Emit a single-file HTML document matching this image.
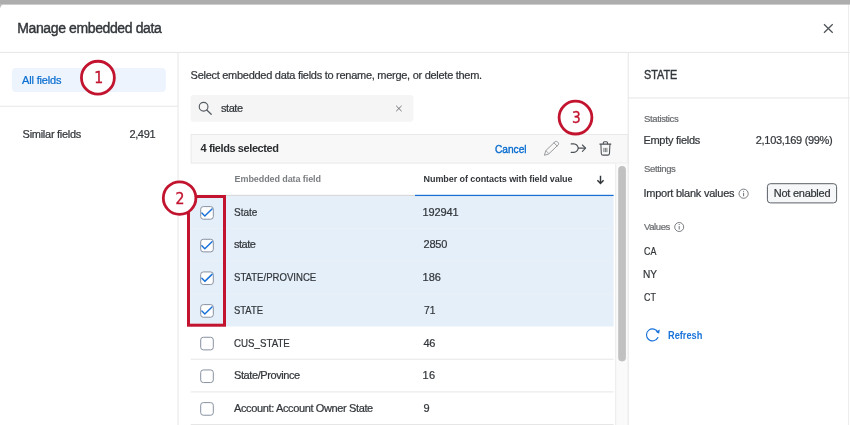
<!DOCTYPE html>
<html><head><meta charset="utf-8">
<style>
*{box-sizing:border-box;margin:0;padding:0}
html,body{width:850px;height:425px;overflow:hidden;background:#fff;font-family:"Liberation Sans",sans-serif;color:#32363a}
.a,.t,svg{position:absolute}
.t{line-height:1;white-space:nowrap;transform-origin:0 0;-webkit-text-stroke:0.22px currentColor}
svg{overflow:visible}
#w{position:absolute;left:0;top:0;width:850px;height:425px;will-change:transform}
</style></head><body><div id="w">
<svg style="left:0;top:0" width="850" height="425" viewBox="0 0 850 425" fill="none" shape-rendering="geometricPrecision">
<rect x="0" y="0" width="850" height="4.6" fill="#adadad"/>
<path d="M0 4.4 L3.2 4.4 Q0.6 4.8 0 8.5 Z" fill="#b4b4b4"/>
<rect x="0" y="51.9" width="850" height="1" fill="#e6e6e6"/>
<rect x="177.55" y="52.4" width="1" height="373" fill="#e6e6e6"/>
<rect x="11.9" y="67.9" width="153.9" height="24" rx="4" fill="#edf4fd"/>
<rect x="0" y="105.75" width="178" height="1" fill="#e6e6e6"/>
<rect x="190.6" y="94.9" width="222.7" height="26.8" rx="3" fill="#f5f5f5"/>
<rect x="191.1" y="134.5" width="437" height="28.6" fill="#f8f8f8" stroke="#e9e9e9" stroke-width="1"/>
<rect x="190.1" y="195.6" width="423.5" height="130.9" fill="#e5eff9"/>
<rect x="190.1" y="194.8" width="225" height="1.2" fill="#d9d9d9"/>
<rect x="415" y="194.8" width="198.6" height="1.25" fill="#1a70d2"/>
<g fill="#ebf0f5">
<rect x="190.1" y="228.0" width="423.5" height="1"/>
<rect x="190.1" y="260.7" width="423.5" height="1"/>
<rect x="190.1" y="293.3" width="423.5" height="1"/>
</g>
<g fill="#e6e6e6">
<rect x="190.7" y="358.7" width="422.9" height="1"/>
<rect x="190.7" y="391.4" width="422.9" height="1"/>
<rect x="190.7" y="424.0" width="422.9" height="1"/>
</g>
<rect x="615.5" y="163.6" width="12.5" height="262" fill="#fafafa"/>
<rect x="615.2" y="163.6" width="1" height="262" fill="#ececec"/>
<rect x="618.2" y="166.1" width="7.7" height="195.3" rx="3.85" fill="#c1c1c1"/>
<rect x="627.7" y="52.4" width="1" height="373" fill="#e6e6e6"/>
<rect x="628" y="97.5" width="222" height="1" fill="#e6e6e6"/>
<rect x="848" y="5" width="1" height="420" fill="#ececec"/>
<rect x="767.4" y="183.7" width="69.2" height="19.2" rx="3" fill="#f6f7f8" stroke="#5b6066" stroke-width="1"/>
<!-- checkboxes -->
<rect x="200.7" y="206.60" width="12.6" height="12.6" rx="2.6" fill="#fff" stroke="#8791a0" stroke-width="1"/>
<path d="M201.9 213.00 L204.8 216.00 L212.0 209.00" stroke="#1a73d9" stroke-width="1.5" stroke-linecap="round" stroke-linejoin="round"/>
<rect x="200.7" y="239.27" width="12.6" height="12.6" rx="2.6" fill="#fff" stroke="#8791a0" stroke-width="1"/>
<path d="M201.9 245.67 L204.8 248.67 L212.0 241.67" stroke="#1a73d9" stroke-width="1.5" stroke-linecap="round" stroke-linejoin="round"/>
<rect x="200.7" y="271.94" width="12.6" height="12.6" rx="2.6" fill="#fff" stroke="#8791a0" stroke-width="1"/>
<path d="M201.9 278.34 L204.8 281.34 L212.0 274.34" stroke="#1a73d9" stroke-width="1.5" stroke-linecap="round" stroke-linejoin="round"/>
<rect x="200.7" y="304.61" width="12.6" height="12.6" rx="2.6" fill="#fff" stroke="#8791a0" stroke-width="1"/>
<path d="M201.9 311.01 L204.8 314.01 L212.0 307.01" stroke="#1a73d9" stroke-width="1.5" stroke-linecap="round" stroke-linejoin="round"/>
<rect x="200.7" y="337.28" width="12.6" height="12.6" rx="2.6" fill="#fff" stroke="#8791a0" stroke-width="1"/>
<rect x="200.7" y="369.95" width="12.6" height="12.6" rx="2.6" fill="#fff" stroke="#8791a0" stroke-width="1"/>
<rect x="200.7" y="402.62" width="12.6" height="12.6" rx="2.6" fill="#fff" stroke="#8791a0" stroke-width="1"/>
<!-- close X -->
<path d="M824 24.2 L832.7 32.8 M832.7 24.2 L824 32.8" stroke="#4c5156" stroke-width="1.2"/>
<!-- search icon -->
<circle cx="203.6" cy="106.75" r="4.35" stroke="#555b62" stroke-width="1.15"/>
<path d="M206.8 110 L211.2 114.3" stroke="#555b62" stroke-width="1.25" stroke-linecap="round"/>
<!-- search clear x -->
<path d="M396.2 105.8 L401.6 111.2 M401.6 105.8 L396.2 111.2" stroke="#6a6d70" stroke-width="0.95"/>
<!-- sort arrow -->
<path d="M600.5 175.8 L600.5 183 M597.4 180.2 L600.5 183.4 L603.6 180.2" stroke="#32363a" stroke-width="1.45" stroke-linejoin="miter"/>
<!-- pencil -->
<g stroke="#94979b" stroke-width="0.95" stroke-linejoin="round" stroke-linecap="round">
<path d="M544.5 154.9 L545.9 150.5 L555.1 141.7 Q556.3 140.9 557.5 141.9 L558.2 142.6 Q559.1 143.8 558.2 144.9 L549 153.7 Z"/>
<path d="M554 142.9 L557.1 146"/>
<path d="M546.2 150.9 L548.5 153.3" stroke-width="0.8"/>
</g>
<!-- merge -->
<g stroke="#4c5156" stroke-width="1.1" stroke-linecap="round" stroke-linejoin="round">
<path d="M571.2 143.9 L573.8 143.9 Q577.4 144.2 578.3 148.15 L585.4 148.15"/>
<path d="M571.2 152.4 L573.8 152.4 Q577.4 152.1 578.3 148.15"/>
<path d="M582.4 145 L585.6 148.15 L582.4 151.3"/>
</g>
<!-- trash -->
<g stroke="#4c5156" stroke-width="1.05" stroke-linecap="round" stroke-linejoin="round">
<path d="M599.9 144.1 L610.8 144.1" stroke-width="1.2"/>
<path d="M603.3 143.8 L603.3 142.7 Q603.3 141.7 604.3 141.7 L606.5 141.7 Q607.5 141.7 607.5 142.7 L607.5 143.8"/>
<path d="M600.9 144.6 L601.3 153.4 Q601.4 155.1 603.1 155.1 L607.7 155.1 Q609.4 155.1 609.5 153.4 L609.9 144.6"/>
<path d="M603.9 148.3 L603.9 151.7 M605.4 148.3 L605.4 151.7 M606.9 148.3 L606.9 151.7" stroke-width="0.75"/>
</g>
<!-- info icons -->
<g stroke="#5b6066" stroke-width="0.8">
<circle cx="743.6" cy="193.7" r="4.6"/>
<path d="M743.6 192.8 L743.6 196.2" stroke-width="0.9"/>
<circle cx="679.2" cy="227" r="4.5"/>
<path d="M679.2 226.1 L679.2 229.5" stroke-width="0.9"/>
</g>
<circle cx="743.6" cy="191.2" r="0.55" fill="#5b6066"/>
<circle cx="679.2" cy="224.5" r="0.55" fill="#5b6066"/>
<!-- refresh -->
<path d="M657.85 337.62 A6 6 0 1 1 657.94 332.36" stroke="#1a73d9" stroke-width="1.15" stroke-linecap="round"/>
<path d="M655.7 331.7 L659.8 329.6 L659.1 333.7 Z" fill="#1a73d9"/>
</svg>

<div class="t" style="left:17.25px;top:21.00px;font-size:14px;letter-spacing:-0.382px;color:#32363a;-webkit-text-stroke-width:0.4px">Manage embedded data</div>
<div class="t" style="left:22.10px;top:75.00px;font-size:11px;letter-spacing:-0.178px;color:#0b6ed0">All fields</div>
<div class="t" style="left:22.60px;top:129.00px;font-size:11px;letter-spacing:-0.277px;color:#32363a">Similar fields</div>
<div class="t" style="left:129.40px;top:129.00px;font-size:11px;letter-spacing:-0.350px;color:#32363a">2,491</div>
<div class="t" style="left:190.60px;top:70.00px;font-size:11px;letter-spacing:-0.277px;color:#32363a">Select embedded data fields to rename, merge, or delete them.</div>
<div class="t" style="left:221.00px;top:103.00px;font-size:11px;letter-spacing:-0.450px;color:#32363a">state</div>
<div class="t" style="left:200.60px;top:143.00px;font-size:11px;letter-spacing:-0.412px;color:#2b2e31;font-weight:bold;-webkit-text-stroke-width:0">4 fields selected</div>
<div class="t" style="left:495.00px;top:144.00px;font-size:11px;transform:scaleX(0.921);color:#0b6ed0;-webkit-text-stroke-width:0.4px">Cancel</div>
<div class="t" style="left:234.60px;top:175.00px;font-size:9px;letter-spacing:-0.089px;color:#7b7e81;font-weight:bold;-webkit-text-stroke-width:0">Embedded data field</div>
<div class="t" style="left:423.60px;top:175.00px;font-size:9px;letter-spacing:-0.076px;color:#32363a;font-weight:bold;-webkit-text-stroke-width:0">Number of contacts with field value</div>
<div class="t" style="left:234.00px;top:207.00px;font-size:11px;transform:scaleX(0.913);color:#32363a">State</div>
<div class="t" style="left:234.00px;top:239.00px;font-size:11px;letter-spacing:-0.500px;color:#32363a">state</div>
<div class="t" style="left:234.00px;top:272.00px;font-size:11px;transform:scaleX(0.872);color:#32363a">STATE/PROVINCE</div>
<div class="t" style="left:234.00px;top:305.00px;font-size:11px;transform:scaleX(0.859);color:#32363a">STATE</div>
<div class="t" style="left:234.00px;top:338.00px;font-size:11px;transform:scaleX(0.884);color:#32363a">CUS_STATE</div>
<div class="t" style="left:234.00px;top:370.00px;font-size:11px;letter-spacing:-0.408px;color:#32363a">State/Province</div>
<div class="t" style="left:234.00px;top:403.00px;font-size:11px;letter-spacing:-0.370px;color:#32363a">Account: Account Owner State</div>
<div class="t" style="left:422.60px;top:207.00px;font-size:11px;letter-spacing:-0.120px;color:#32363a">192941</div>
<div class="t" style="left:423.60px;top:239.00px;font-size:11px;letter-spacing:-0.267px;color:#32363a">2850</div>
<div class="t" style="left:422.60px;top:272.00px;font-size:11px;letter-spacing:-0.050px;color:#32363a">186</div>
<div class="t" style="left:423.60px;top:305.00px;font-size:11px;transform:scaleX(0.933);color:#32363a">71</div>
<div class="t" style="left:423.60px;top:338.00px;font-size:11px;letter-spacing:-0.400px;color:#32363a">46</div>
<div class="t" style="left:422.60px;top:370.00px;font-size:11px;letter-spacing:0.200px;color:#32363a">16</div>
<div class="t" style="left:423.60px;top:403.00px;font-size:11px;letter-spacing:-0.100px;color:#32363a">9</div>
<div class="t" style="left:643.50px;top:69.00px;font-size:12px;transform:scaleX(0.900);color:#32363a;-webkit-text-stroke-width:0.4px">STATE</div>
<div class="t" style="left:644.00px;top:114.00px;font-size:9.5px;letter-spacing:-0.367px;color:#6a6d70">Statistics</div>
<div class="t" style="left:643.40px;top:135.00px;font-size:11px;letter-spacing:-0.273px;color:#32363a">Empty fields</div>
<div class="t" style="left:755.80px;top:135.00px;font-size:11px;letter-spacing:-0.314px;color:#32363a">2,103,169 (99%)</div>
<div class="t" style="left:644.00px;top:164.00px;font-size:9.5px;letter-spacing:-0.357px;color:#6a6d70">Settings</div>
<div class="t" style="left:643.40px;top:188.00px;font-size:11px;letter-spacing:-0.233px;color:#32363a">Import blank values</div>
<div class="t" style="left:773.80px;top:188.00px;font-size:11px;letter-spacing:-0.260px;color:#32363a">Not enabled</div>
<div class="t" style="left:644.00px;top:222.00px;font-size:9.5px;letter-spacing:-0.400px;color:#6a6d70">Values</div>
<div class="t" style="left:644.40px;top:246.00px;font-size:11px;transform:scaleX(0.806);color:#32363a">CA</div>
<div class="t" style="left:643.48px;top:269.00px;font-size:11px;transform:scaleX(0.921);color:#32363a">NY</div>
<div class="t" style="left:644.40px;top:292.00px;font-size:11px;transform:scaleX(0.807);color:#32363a">CT</div>
<div class="t" style="left:668.20px;top:330.00px;font-size:10.5px;transform:scaleX(0.879);color:#1a73d9;font-weight:bold;-webkit-text-stroke-width:0">Refresh</div>

<!-- annotations -->
<svg style="left:0;top:0" width="850" height="425" viewBox="0 0 850 425" fill="none">
<rect x="188.5" y="196.5" width="36" height="128.7" stroke="#c2142f" stroke-width="3"/>
<g stroke="#c2142f" stroke-width="2.8" fill="#fff">
<circle cx="97.9" cy="77.7" r="16.45"/>
<circle cx="179.6" cy="198.1" r="16.3"/>
<circle cx="575.5" cy="117.6" r="16.4"/>
</g>
<g font-family="'DejaVu Sans',sans-serif" font-size="16" fill="#c2142f" stroke="#c2142f" stroke-width="0.4" text-anchor="middle">
<text transform="translate(98.7 82.6) scale(0.88 1)">1</text>
<text transform="translate(180.1 203.7) scale(0.88 1)">2</text>
<text transform="translate(576.4 122.6) scale(0.86 1)">3</text>
</g>
</svg>
</div></body></html>
